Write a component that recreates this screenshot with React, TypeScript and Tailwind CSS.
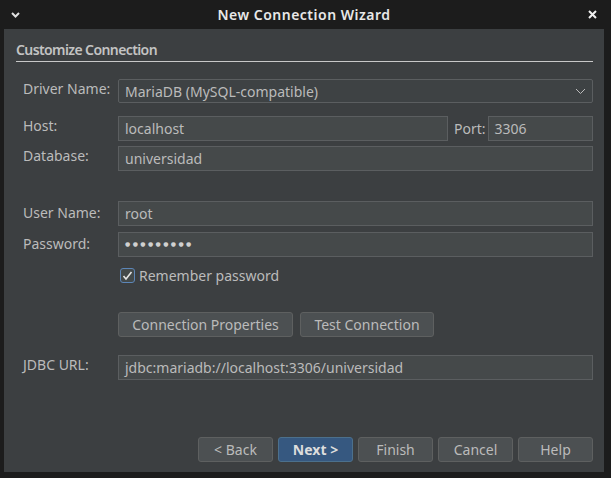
import React from "react";

const font = { fontFamily: '"Noto Sans", "DejaVu Sans", sans-serif' };

function Field({ value, className = "" }: { value: React.ReactNode; className?: string }) {
  return (
    <div
      className={`h-[25px] flex items-center px-[6px] border border-[#5b5e60] bg-[#45494a] text-[#bbbbbb] text-[14px] whitespace-nowrap ${className}`}
    >
      {value}
    </div>
  );
}

function Btn({ label, primary = false, className = "" }: { label: string; primary?: boolean; className?: string }) {
  return (
    <div
      className={`h-[25px] flex items-center justify-center rounded-[3px] border text-[14px] whitespace-nowrap ${
        primary
          ? "bg-[#365880] border-[#4c708c] text-[#dddddd] font-bold"
          : "bg-[#4c5052] border-[#5e6060] text-[#bbbbbb]"
      } ${className}`}
    >
      {label}
    </div>
  );
}

function Row({
  label,
  children,
  className = "",
  labelClass = "",
}: {
  label: string;
  children: React.ReactNode;
  className?: string;
  labelClass?: string;
}) {
  return (
    <div className={`flex items-start ${className}`}>
      <div className={`w-[102px] shrink-0 pl-[7px] text-[14px] leading-[20px] text-[#bbbbbb] whitespace-nowrap ${labelClass}`}>
        {label}
      </div>
      <div className="flex-1 flex items-center">{children}</div>
    </div>
  );
}

export default function App() {
  return (
    <div className="w-[611px] h-[478px] bg-[#1c1c1c] flex flex-col overflow-hidden" style={font}>
      {/* title bar */}
      <div className="h-[29px] flex items-center justify-between px-[11px] text-[#e8e8e8]">
        <svg width="9" height="6" viewBox="0 0 9 6">
          <path d="M1 1 L4.5 4.5 L8 1" stroke="#e0e0e0" strokeWidth="2" fill="none" />
        </svg>
        <div className="text-[14px] font-semibold tracking-[0.5px]">New Connection Wizard</div>
        <svg width="9" height="9" viewBox="0 0 9 9" className="mr-[3px]">
          <path d="M1 1 L8 8 M8 1 L1 8" stroke="#f0f0f0" strokeWidth="2" fill="none" />
        </svg>
      </div>

      <div className="flex flex-1">
        <div className="ml-[4px] w-[600px] h-[443px] bg-[#3c3f41] flex flex-col pl-[12px] pr-[11px]">
          <div className="pt-[11px] text-[14px] leading-[20px] font-semibold tracking-[-0.6px] text-[#c3c3c3]">
            Customize Connection
          </div>
          <div className="mt-[1px] h-[1px] bg-[#c8c8c8]" />

          <Row label="Driver Name:" className="mt-[17px]">
            <div className="flex-1 h-[24px] flex items-center justify-between px-[6px] border border-[#5b5e60] bg-[#3e4244] rounded-[2px] text-[#bbbbbb] text-[14px]">
              <span>MariaDB (MySQL-compatible)</span>
              <svg width="11" height="7" viewBox="0 0 11 7">
                <path d="M1 1 L5.5 5.5 L10 1" stroke="#bbbbbb" strokeWidth="1" fill="none" />
              </svg>
            </div>
          </Row>

          <Row label="Host:" className="mt-[13px]">
            <Field value="localhost" className="w-[330px]" />
            <span className="ml-[6px] text-[14px] text-[#bbbbbb]">Port:</span>
            <Field value="3306" className="ml-[2px] flex-1" />
          </Row>

          <Row label="Database:" className="mt-[5px]">
            <Field value="universidad" className="flex-1" />
          </Row>

          <Row label="User Name:" className="mt-[30px]" labelClass="pt-[2px]">
            <Field value="root" className="flex-1" />
          </Row>

          <Row label="Password:" className="mt-[6px]" labelClass="pt-[2px]">
            <Field
              value={<span className="text-[6px] tracking-[2.4px] text-[#d0d0d0]">●●●●●●●●●</span>}
              className="flex-1"
            />
          </Row>

          <div className="mt-[8px] ml-[104px] flex items-center gap-[4px]">
            <div className="w-[15px] h-[15px] rounded-[3px] border border-[#5c86b8] bg-[#43494a] flex items-center justify-center">
              <svg width="11" height="10" viewBox="0 0 11 10">
                <path d="M1.5 5 L4 8 L9.5 1" stroke="#e6e6e6" strokeWidth="1.6" fill="none" />
              </svg>
            </div>
            <span className="text-[14px] text-[#bbbbbb]">Remember password</span>
          </div>

          <div className="mt-[26px] ml-[102px] flex gap-[7px]">
            <Btn label="Connection Properties" className="w-[175px]" />
            <Btn label="Test Connection" className="w-[134px]" />
          </div>

          <Row label="JDBC URL:" className="mt-[18px]">
            <Field value="jdbc:mariadb://localhost:3306/universidad" className="flex-1" />
          </Row>

          <div className="mt-auto mb-[10px] flex justify-end gap-[5px]">
            <Btn label="< Back" className="w-[75px]" />
            <Btn label="Next >" primary className="w-[75px]" />
            <Btn label="Finish" className="w-[75px]" />
            <Btn label="Cancel" className="w-[75px]" />
            <Btn label="Help" className="w-[75px]" />
          </div>
        </div>
      </div>
    </div>
  );
}
